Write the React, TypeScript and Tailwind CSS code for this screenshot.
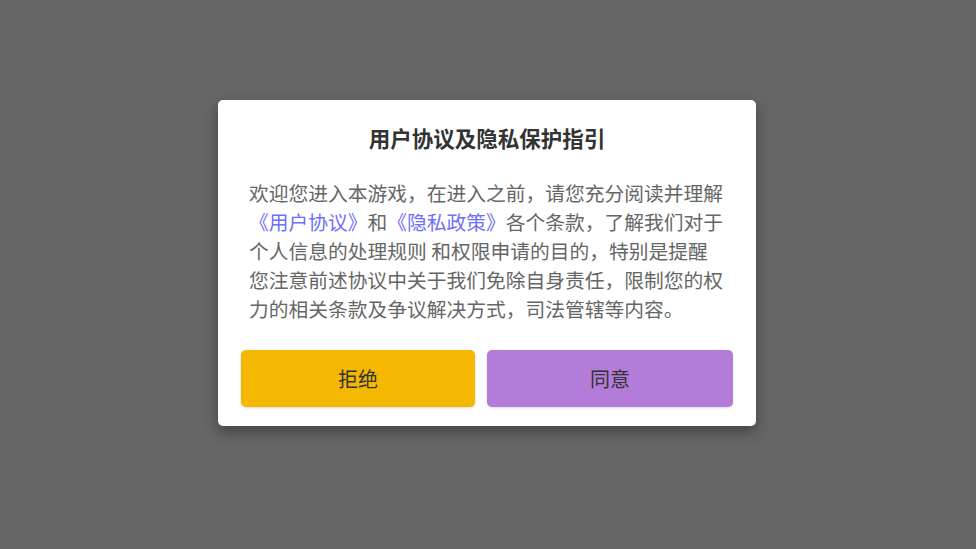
const FONT = '"Noto Sans CJK SC", "Noto Sans", sans-serif'

function Link({ children }: { children: React.ReactNode }) {
  return <span className="text-[#6f6ff7]">{children}</span>
}

export default function App() {
  return (
    <div
      className="w-[976px] h-[549px] bg-[#666666] flex flex-col items-center pt-[100px]"
      style={{ fontFamily: FONT }}
    >
      <div className="mr-[2px] w-[538px] h-[326px] bg-white rounded-[5px] shadow-[0_6px_14px_rgba(0,0,0,0.35)] flex flex-col">
        <h1 className="pt-[24px] text-center text-[21.5px] leading-[28px] font-semibold text-[#333333]">
          用户协议及隐私保护指引
        </h1>

        <div className="mt-[26px] pl-[31px] text-[19.75px] leading-[29px] text-[#666666] whitespace-nowrap">
          <div>欢迎您进入本游戏，在进入之前，请您充分阅读并理解</div>
          <div>
            <Link>《用户协议》</Link>和<Link>《隐私政策》</Link>各个条款，了解我们对于
          </div>
          <div>个人信息的处理规则 和权限申请的目的，特别是提醒</div>
          <div>您注意前述协议中关于我们免除自身责任，限制您的权</div>
          <div>力的相关条款及争议解决方式，司法管辖等内容。</div>
        </div>

        <div className="mt-[27px] px-[23px] flex gap-[12px]">
          <button className="w-[234px] h-[57px] rounded-[5px] bg-[#f5b800] text-[20px] text-[#333333] shadow-[0_1px_3px_rgba(0,0,0,0.15)]">
            拒绝
          </button>
          <button className="w-[246px] h-[57px] rounded-[5px] bg-[#b37cd8] text-[20px] text-[#333333] shadow-[0_1px_3px_rgba(0,0,0,0.15)]">
            同意
          </button>
        </div>
      </div>
    </div>
  )
}
